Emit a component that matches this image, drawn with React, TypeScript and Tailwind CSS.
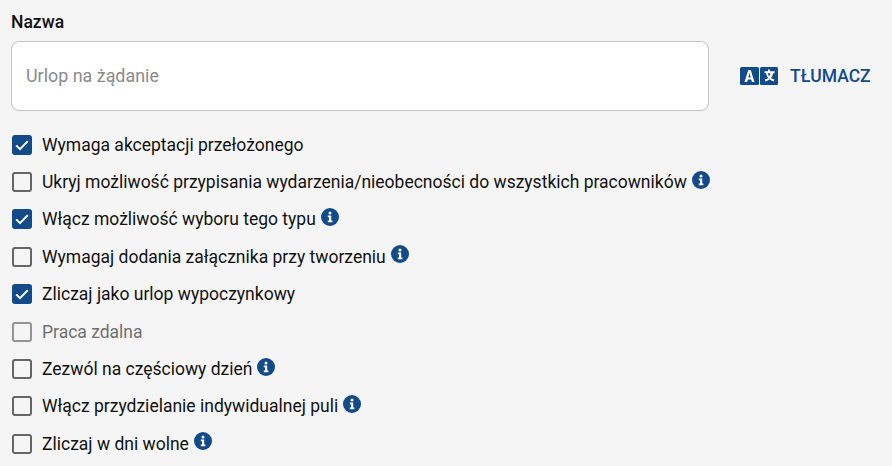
const rows = [
  { label: 'Wymaga akceptacji przełożonego', checked: true },
  { label: 'Ukryj możliwość przypisania wydarzenia/nieobecności do wszystkich pracowników', info: true },
  { label: 'Włącz możliwość wyboru tego typu', checked: true, info: true },
  { label: 'Wymagaj dodania załącznika przy tworzeniu', info: true },
  { label: 'Zliczaj jako urlop wypoczynkowy', checked: true },
  { label: 'Praca zdalna', disabled: true },
  { label: 'Zezwól na częściowy dzień', info: true },
  { label: 'Włącz przydzielanie indywidualnej puli', info: true },
  { label: 'Zliczaj w dni wolne', info: true },
]

function InfoIcon() {
  return (
    <svg width="18" height="18" viewBox="0 0 18 18" className="ml-[5px] mb-[5px] shrink-0">
      <circle cx="9" cy="9" r="9" fill="#134a8a" />
      <circle cx="9" cy="5" r="1.5" fill="#fff" />
      <path d="M6.8 7.6h3.4v5h1.2v1.6H6.8v-1.6h1.2v-3.4H6.8z" fill="#fff" />
    </svg>
  )
}

function TranslateIcon() {
  return (
    <svg width="38" height="18" viewBox="0 0 38 18" className="shrink-0">
      <rect x="0" y="0" width="19" height="18" rx="1.5" fill="#134a8a" />
      <rect x="20" y="0" width="18" height="18" rx="1.5" fill="#134a8a" />
      <path fillRule="evenodd" d="M8.3 3h2.4l3.8 12h-2.6l-.7-2.6H7.8l-.7 2.6H4.5zM9.5 6l-1.2 4.4h2.4z" fill="#fff" />
      <path d="M28 2.5h2v1.8h4.6v1.9h-1.5c-.4 2-1.1 3.5-2.1 4.7.9.7 2.1 1.2 3.5 1.6l-.9 1.9c-1.6-.5-2.9-1.2-4-2.1-1.1.9-2.4 1.6-4 2.1l-.9-1.9c1.4-.4 2.6-.9 3.5-1.6-1-1.2-1.7-2.7-2.1-4.7h-1.5V4.3H28zm-.2 3.7c.3 1.3.7 2.4 1.2 3.2.6-.8 1-1.9 1.3-3.2z" fill="#fff" />
    </svg>
  )
}

function Checkbox({ checked, disabled }: { checked?: boolean; disabled?: boolean }) {
  if (checked) {
    return (
      <span className="w-5 h-5 rounded-[3px] bg-[#134a8a] flex items-center justify-center shrink-0">
        <svg width="16" height="16" viewBox="0 0 16 16" fill="none">
          <path d="M2.2 8.4l3.8 3.7 7.8-8" stroke="#fff" strokeWidth="2" />
        </svg>
      </span>
    )
  }
  return <span className={`w-5 h-5 rounded-[3px] border-2 shrink-0 ${disabled ? 'border-[#949494]' : 'border-[#666666]'}`} />
}

export default function App() {
  return (
    <div className="w-[892px] h-[466px] overflow-hidden bg-[#f5f5f5] font-['Roboto',sans-serif] pl-[11px] pt-[12px]">
      <div className="text-[17.5px] leading-[20px] font-medium text-[#111111]">Nazwa</div>
      <div className="flex items-center mt-[9px]">
        <div className="w-[698px] h-[70px] bg-white border border-[#c4c4c4] rounded-[8px] flex items-center pl-[14px] text-[17.9px] text-[#8a8a8a]">
          Urlop na żądanie
        </div>
        <div className="flex items-center ml-[31px]">
          <TranslateIcon />
          <span className="ml-[12px] text-[17.5px] font-medium text-[#134a8a]">TŁUMACZ</span>
        </div>
      </div>
      <div className="mt-[15px] pl-[1px]">
        {rows.map(r => (
          <div key={r.label} className="h-[37.4px] flex items-center">
            <Checkbox checked={r.checked} disabled={r.disabled} />
            <span className={`ml-[10px] text-[17.5px] whitespace-nowrap ${r.disabled ? 'text-[#707070]' : 'text-[#111111]'}`}>{r.label}</span>
            {r.info && <InfoIcon />}
          </div>
        ))}
      </div>
    </div>
  )
}
